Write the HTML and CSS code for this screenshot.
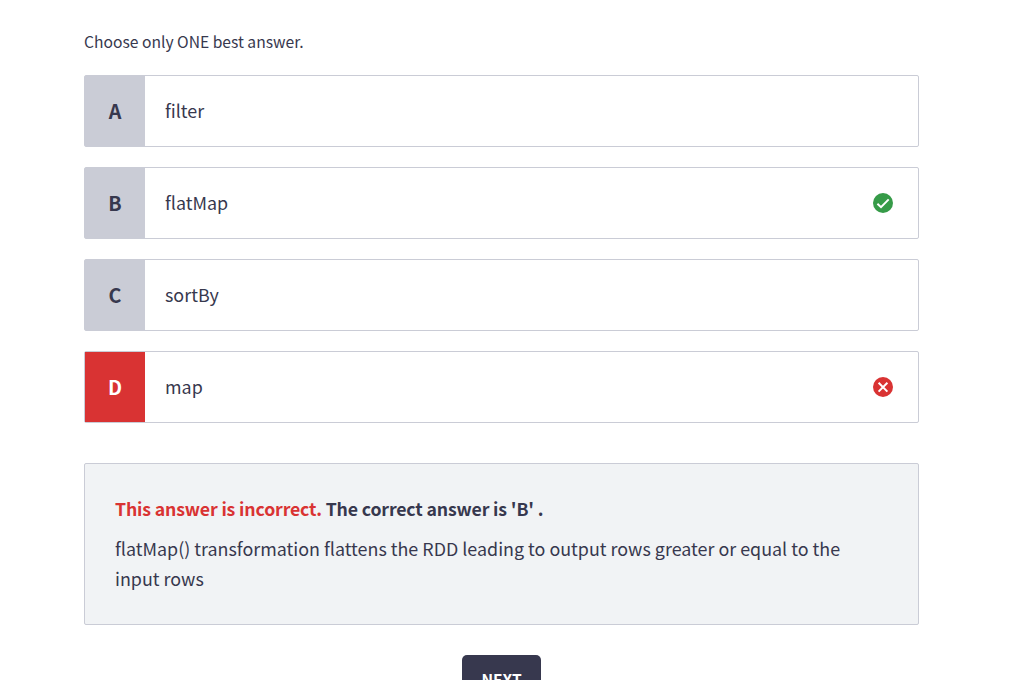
FILE: index.html
```
<!DOCTYPE html>
<html lang="en">
<head>
<meta charset="utf-8">
<title>Quiz</title>
<link rel="stylesheet" href="styles.css">
</head>
<body>
<main class="quiz">
  <p class="hint"><span>Choose only ONE best answer.</span></p>
  <ul class="options">
    <li class="option"><span class="letter">A</span><span class="label">filter</span></li>
    <li class="option"><span class="letter">B</span><span class="label">flatMap</span>
      <svg class="mark" viewBox="0 0 20 20"><circle cx="10" cy="10" r="10" fill="#369b48"/><path d="M4.4 10.8 8 14.2 15.7 6.4" fill="none" stroke="#fff" stroke-width="2"/></svg></li>
    <li class="option"><span class="letter">C</span><span class="label">sortBy</span></li>
    <li class="option wrong"><span class="letter">D</span><span class="label">map</span>
      <svg class="mark" viewBox="0 0 20 20"><circle cx="10" cy="10" r="10" fill="#d93333"/><path d="M5.6 5.8 14.4 14.6M14.4 5.8 5.6 14.6" fill="none" stroke="#fff" stroke-width="2"/></svg></li>
  </ul>
  <section class="explanation">
    <p class="verdict"><span class="incorrect">This answer is incorrect.</span> <span class="correct">The correct answer is 'B' .</span></p>
    <p class="reason">flatMap() transformation flattens the RDD leading to output rows greater or equal to the<br>input rows</p>
  </section>
  <button class="next" type="button">NEXT</button>
</main>
</body>
</html>
```
FILE: styles.css
```
* { box-sizing: border-box; }
body {
  margin: 0;
  height: 680px;
  overflow: hidden;
  background: #fff;
  color: #37384e;
  font-family: "Noto Sans CJK SC", "Noto Sans", sans-serif;
  font-size: 17.9px;
}
p, ul { margin: 0; padding: 0; }
.quiz {
  display: flex;
  flex-direction: column;
  width: 835px;
  margin-left: 84px;
  padding-top: 30px;
}
.hint { font-size: 15.65px; line-height: 24px; margin-bottom: 21px; }
.options { display: grid; gap: 20px; list-style: none; }
.option {
  display: flex;
  align-items: center;
  height: 72px;
  padding-right: 25px;
  border: 1px solid #caccd6;
  border-radius: 2px;
}
.letter {
  display: flex;
  align-items: center;
  justify-content: center;
  width: 60px;
  height: 70px;
  padding-bottom: 2px;
  background: #caccd6;
  font-size: 19.7px;
  font-weight: 700;
}
.wrong .letter { background: #d93333; color: #fff; }
.label { flex: 1; padding: 0 0 2px 20px; }
.mark { width: 20px; height: 20px; }
.explanation {
  height: 162px;
  margin-top: 40px;
  padding: 29px 30px;
  border: 1px solid #caccd6;
  border-radius: 2px;
  background: #f1f3f5;
  line-height: 30px;
}
.verdict {
  margin-bottom: 10px;
  font-size: 17.7px;
  font-weight: 700;
  letter-spacing: -0.15px;
}
.incorrect { color: #d93333; }
.next {
  width: 79px;
  height: 50px;
  margin: 30px 0 0 378px;
  padding: 0 0 2px;
  border: 0;
  border-radius: 5px;
  background: #37384e;
  color: #fff;
  font: 700 15.5px/46px "Noto Sans CJK SC", "Noto Sans", sans-serif;
}
```
